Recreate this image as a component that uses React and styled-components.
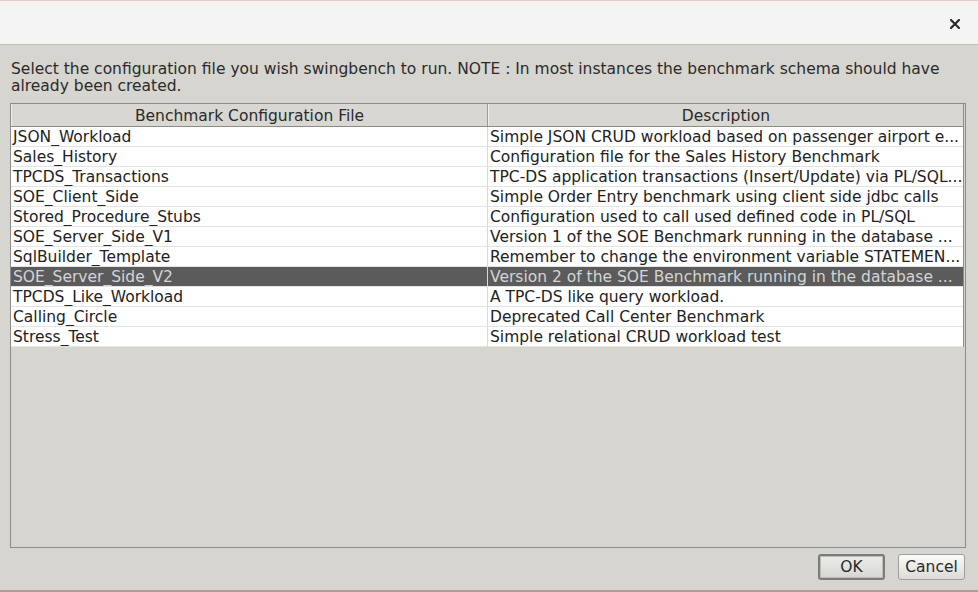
import React from "react";
import styled, { createGlobalStyle } from "styled-components";

const rows = [
  ["JSON_Workload", "Simple JSON CRUD workload based on passenger airport e..."],
  ["Sales_History", "Configuration file for the Sales History Benchmark"],
  ["TPCDS_Transactions", "TPC-DS application transactions (Insert/Update) via PL/SQL..."],
  ["SOE_Client_Side", "Simple Order Entry benchmark using client side jdbc calls"],
  ["Stored_Procedure_Stubs", "Configuration used to call used defined code in PL/SQL"],
  ["SOE_Server_Side_V1", "Version 1 of the SOE Benchmark running in the database ..."],
  ["SqlBuilder_Template", "Remember to change the environment variable STATEMEN..."],
  ["SOE_Server_Side_V2", "Version 2 of the SOE Benchmark running in the database ..."],
  ["TPCDS_Like_Workload", "A TPC-DS like query workload."],
  ["Calling_Circle", "Deprecated Call Center Benchmark"],
  ["Stress_Test", "Simple relational CRUD workload test"],
];

const SELECTED = 7;

function App() {
  return (
    <>
      <GlobalStyle />
      <Window>
        <TitleBar>
          <CloseButton aria-label="close">
            <svg width="10" height="10" viewBox="0 0 10 10">
              <path d="M1 1 L9 9 M9 1 L1 9" stroke="#2b2b2b" strokeWidth="2.2" strokeLinecap="square" />
            </svg>
          </CloseButton>
        </TitleBar>
        <Body>
          <Message>
            Select the configuration file you wish swingbench to run. NOTE : In most instances the benchmark schema should have
            already been created.
          </Message>
          <ScrollPane>
            <HeaderRow>
              <HeaderCell>Benchmark Configuration File</HeaderCell>
              <HeaderCell last>Description</HeaderCell>
            </HeaderRow>
            {rows.map(([name, desc], i) => (
              <Row key={name} selected={i === SELECTED}>
                <Cell>{name}</Cell>
                <Cell last>{desc}</Cell>
              </Row>
            ))}
          </ScrollPane>
          <Footer>
            <Button primary>OK</Button>
            <Button>Cancel</Button>
          </Footer>
        </Body>
      </Window>
    </>
  );
}

export default App;

const GlobalStyle = createGlobalStyle`
  html, body {
    margin: 0;
    padding: 0;
    height: 100%;
  }
  body {
    font-family: "DejaVu Sans", "Liberation Sans", sans-serif;
    font-size: 15.5px;
    color: #2b2b2b;
    overflow: hidden;
  }
`;

const Window = styled.div`
  width: 978px;
  height: 592px;
  display: flex;
  flex-direction: column;
  background: #d6d5d0;
  border-top: 1px solid #e9c9c4;
  border-bottom: 2px solid #b49a96;
  box-sizing: border-box;
`;

const TitleBar = styled.div`
  height: 43px;
  flex: none;
  background: #f4f4f4;
  border-bottom: 1px solid #bdbcb8;
  display: flex;
  align-items: center;
  justify-content: flex-end;
  padding-right: 18px;
`;

const CloseButton = styled.div`
  width: 10px;
  height: 10px;
  display: flex;
  margin-top: 2px;
`;

const Body = styled.div`
  flex: 1;
  display: flex;
  flex-direction: column;
  padding: 16px 12px 10px 10px;
  min-height: 0;
`;

const Message = styled.div`
  line-height: 17px;
  padding-left: 1px;
  padding-right: 10px;
  color: #2b2b2b;
  margin-bottom: 8px;
`;

const ScrollPane = styled.div`
  flex: 1;
  border: 1px solid #8c8c8a;
  background: #d6d5d0;
  display: flex;
  flex-direction: column;
  min-height: 0;
  padding-right: 1px;
`;

const HeaderRow = styled.div`
  display: grid;
  grid-template-columns: 477px 1fr;
  height: 22px;
  border-bottom: 1px solid #8c8c8a;
  background: #d8d7d2;
`;

const HeaderCell = styled.div`
  display: flex;
  align-items: center;
  justify-content: center;
  padding-top: 1px;
  border-right: ${(p) => (p.last ? "1px solid #8c8c8a" : "1px solid #9a9a98")};
  border-left: 1px solid #efefec;
  color: #2a2a2a;
`;

const Row = styled.div`
  display: grid;
  grid-template-columns: 477px 1fr;
  height: 20px;
  background: ${(p) => (p.selected ? "#5b5b5b" : "#ffffff")};
  color: ${(p) => (p.selected ? "#d4d4d4" : "#222222")};
  border-right: 1px solid #8c8c8a;
`;

const Cell = styled.div`
  display: flex;
  align-items: center;
  padding: 1px 2px 0 2px;
  white-space: nowrap;
  overflow: hidden;
  border-right: ${(p) => (p.last ? "none" : "1px solid #d9d9d9")};
  border-bottom: 1px solid #e4e4e4;
`;

const Footer = styled.div`
  display: flex;
  justify-content: flex-end;
  gap: 13px;
  padding-top: 6px;
  padding-right: 1px;
`;

const Button = styled.div`
  width: 67px;
  height: 26px;
  box-sizing: border-box;
  display: flex;
  align-items: center;
  justify-content: center;
  border-radius: 3px;
  color: #2a2a2a;
  border: ${(p) => (p.primary ? "2px solid #7c7c7a" : "1px solid #9e9e9b")};
  background: ${(p) =>
    p.primary
      ? "linear-gradient(#ececea, #d7d6d2)"
      : "linear-gradient(#fbfbfa, #dcdbd8)"};
  box-shadow: ${(p) => (p.primary ? "inset 0 0 0 1px #bdbcb8" : "none")};
`;
